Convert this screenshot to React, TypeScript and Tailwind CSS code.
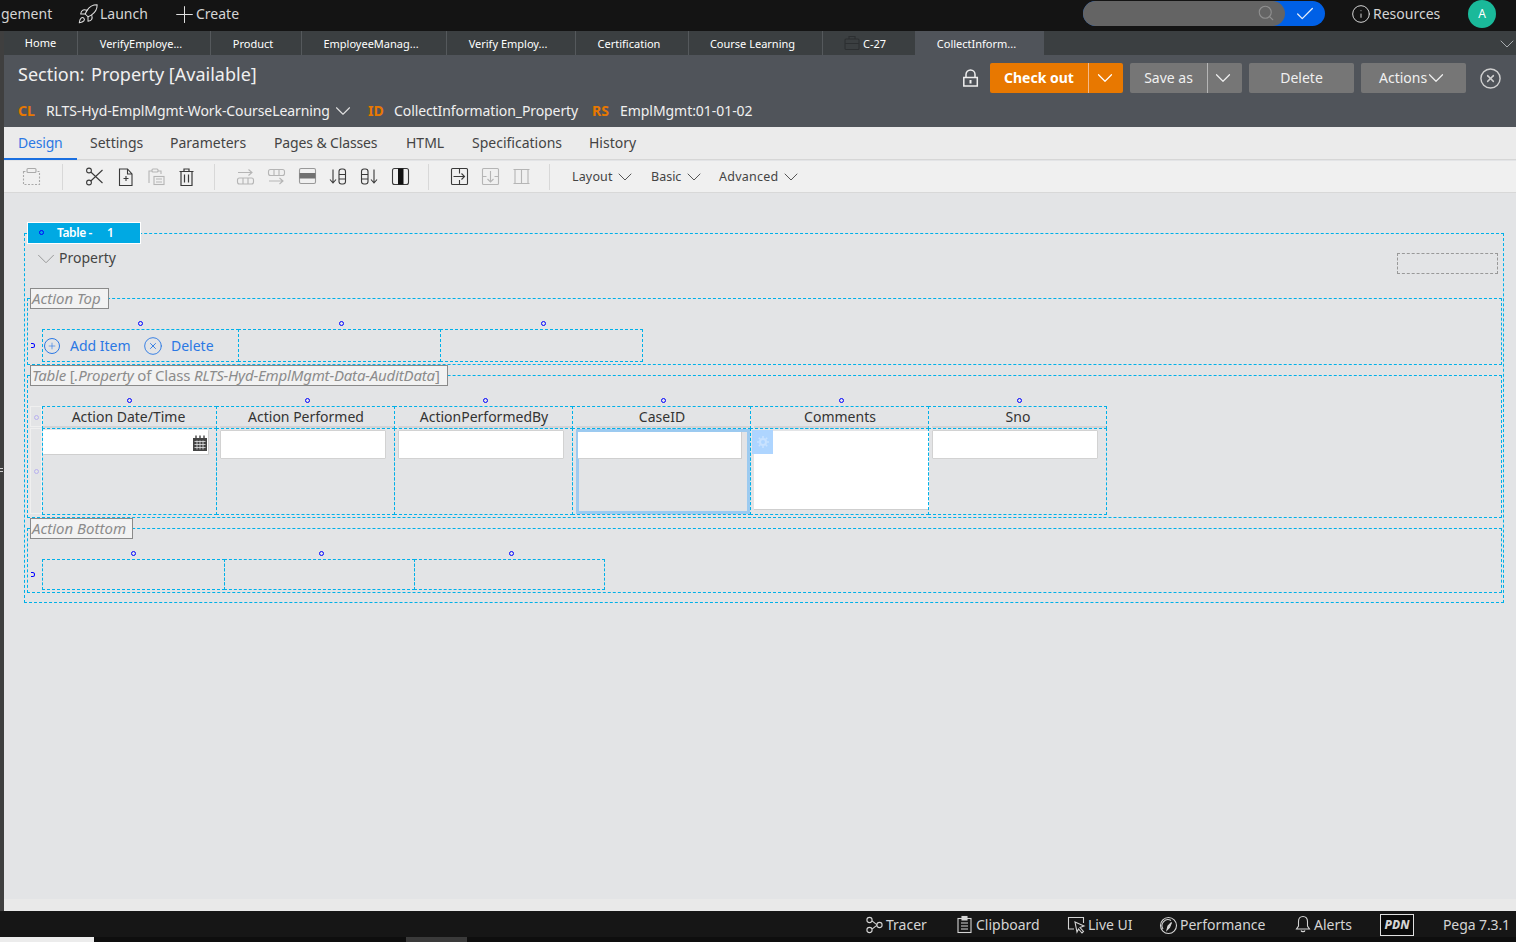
import React from "react";
import { Rocket, Plus, Search, Check, Info, ChevronDown, CircleX } from "lucide-react";

const Dash = ({ c }: { c: string }) => <div className={"absolute border border-dashed border-[#00b0e8] " + c} />;
const Dot = ({ c }: { c: string }) => <div className={"absolute w-[5px] h-[5px] rounded-full border border-[#0000ff] " + c} />;
const T = ({ c, children }: { c: string; children: React.ReactNode }) => <div className={"absolute whitespace-nowrap " + c}>{children}</div>;
const Ico = ({ c, children, size = 20, stroke = "#333" }: { c: string; children: React.ReactNode; size?: number; stroke?: string }) => (
  <svg className={"absolute " + c} width={size} height={size} viewBox={`0 0 ${size} ${size}`} fill="none" stroke={stroke} strokeWidth="1.1">{children}</svg>
);
const Tab = ({ c, children }: { c: string; children: React.ReactNode }) => (
  <div className={"absolute top-[31px] h-[24px] leading-[25px] text-[11px] text-center text-white border-r border-[#55595c] pr-[6px] " + c}>{children}</div>
);
const HeadTxt = ({ c, children }: { c: string; children: React.ReactNode }) => (
  <div className={"absolute top-[407px] h-[20px] leading-[20px] text-[14px] text-center text-[#333] " + c}>{children}</div>
);

export default function App() {
  return (
    <div className="relative w-[1516px] h-[942px] overflow-hidden bg-[#e3e4e6] [font-family:'Open_Sans',sans-serif]">
      {/* top bar */}
      <div className="absolute left-0 top-0 w-[1516px] h-[31px] bg-[#141414]" />
      <T c="left-[1px] top-[4px] h-[20px] leading-[20px] text-[14px] text-[#d4d4d4]">gement</T>
      <Rocket className="absolute left-[77px] top-[3px] text-[#e0e0e0]" size={22} strokeWidth={1.1} />
      <T c="left-[100px] top-[4px] h-[20px] leading-[20px] text-[14px] text-[#d4d4d4]">Launch</T>
      <Plus className="absolute left-[171px] top-[1px] text-[#e0e0e0]" size={27} strokeWidth={0.9} />
      <T c="left-[196px] top-[4px] h-[20px] leading-[20px] text-[14px] text-[#d4d4d4]">Create</T>
      <div className="absolute left-[1083px] top-[1px] w-[242px] h-[25px] rounded-full bg-[#0060e6]" />
      <div className="absolute left-[1083px] top-[1px] w-[202px] h-[25px] rounded-full bg-[#646464]" />
      <Search className="absolute left-[1257px] top-[4px] text-[#8f8f8f]" size={18} strokeWidth={1.5} />
      <Check className="absolute left-[1294px] top-[3px] text-[#e8eef8]" size={22} strokeWidth={1.4} />
      <Info className="absolute left-[1351px] top-[4px] text-[#d4d4d4]" size={20} strokeWidth={1.2} />
      <T c="left-[1373px] top-[4px] h-[20px] leading-[20px] text-[14px] text-[#d4d4d4]">Resources</T>
      <div className="absolute left-[1468px] top-0 w-[28px] h-[28px] rounded-full bg-[#1ab99a] text-white text-[12px] leading-[28px] text-center">A</div>

      {/* left strip */}
      <div className="absolute left-0 top-[31px] w-[4px] h-[880px] bg-[#3f3f3f]" />
      <div className="absolute left-0 top-[468px] w-[3px] h-[1px] bg-[#cfcfcf]" />
      <div className="absolute left-0 top-[471px] w-[3px] h-[1px] bg-[#cfcfcf]" />

      {/* tab bar */}
      <div className="absolute left-[4px] top-[31px] w-[1512px] h-[24px] bg-[#3b3f41]" />
      <Tab c="left-[4px] w-[74px]"><span className="relative top-[-1px] left-[3px]">Home</span></Tab>
      <Tab c="left-[78px] w-[133px]">VerifyEmploye...</Tab>
      <Tab c="left-[211px] w-[91px]">Product</Tab>
      <Tab c="left-[302px] w-[145px]">EmployeeManag...</Tab>
      <Tab c="left-[447px] w-[129px]">Verify Employ...</Tab>
      <Tab c="left-[576px] w-[113px]">Certification</Tab>
      <Tab c="left-[689px] w-[134px]">Course Learning</Tab>
      <T c="left-[863px] top-[31px] h-[24px] leading-[25px] text-[11px] text-white">C-27</T>
      <Ico c="left-[844px] top-[35px]" size={16} stroke="#2c2f31">
        <rect x="1" y="4" width="14" height="10.5" rx="1" />
        <path d="M5 4V1.5h6V4M1 8.5h14" />
      </Ico>
      <div className="absolute left-[915px] top-[31px] w-[129px] h-[24px] bg-[#50545a] text-white text-[11px] leading-[25px] text-center pr-[6px]">CollectInform...</div>
      <ChevronDown className="absolute left-[1495px] top-[32px] text-[#a9adb0]" size={24} strokeWidth={1} />

      {/* header */}
      <div className="absolute left-[4px] top-[55px] w-[1512px] h-[72px] bg-[#50545a]" />
      <T c="left-[18px] top-[61px] h-[26px] leading-[26px] text-[18px] text-[#f0f0f0]">Section:</T>
      <T c="left-[91px] top-[61px] h-[26px] leading-[26px] text-[18px] text-[#f0f0f0]">Property [Available]</T>
      <T c="left-[18px] top-[101px] h-[20px] leading-[20px] text-[14px] font-bold text-[#e87800]">CL</T>
      <T c="left-[46px] top-[101px] h-[20px] leading-[20px] text-[14px] tracking-[-0.09px] text-[#f0f0f0]">RLTS-Hyd-EmplMgmt-Work-CourseLearning</T>
      <ChevronDown className="absolute left-[330px] top-[98px] text-[#e0e0e0]" size={26} strokeWidth={1} />
      <T c="left-[368px] top-[101px] h-[20px] leading-[20px] text-[14px] font-bold text-[#e87800]">ID</T>
      <T c="left-[394px] top-[101px] h-[20px] leading-[20px] text-[14px] tracking-[-0.09px] text-[#f0f0f0]">CollectInformation_Property</T>
      <T c="left-[592px] top-[101px] h-[20px] leading-[20px] text-[14px] font-bold text-[#e87800]">RS</T>
      <T c="left-[620px] top-[101px] h-[20px] leading-[20px] text-[14px] tracking-[-0.05px] text-[#f0f0f0]">EmplMgmt:01-01-02</T>

      <Ico c="left-[962px] top-[69px]" size={18} stroke="#eeeeee">
        <path d="M4 8.500V5.500a4.500 4.500 0 0 1 9 0v3" strokeWidth="1.5" />
        <rect x="1.800" y="8.500" width="13.500" height="8.500" strokeWidth="1.5" />
        <rect x="7.500" y="11" width="2" height="3.500" fill="#eeeeee" stroke="none" />
      </Ico>
      <div className="absolute left-[990px] top-[63px] w-[133px] h-[30px] rounded-[2px] bg-[#e87800]" />
      <T c="left-[990px] top-[63px] w-[98px] h-[30px] leading-[29px] text-center text-[14px] font-bold text-white">Check out</T>
      <div className="absolute left-[1088px] top-[63px] w-[1px] h-[30px] bg-[#f4b98a]" />
      <ChevronDown className="absolute left-[1092px] top-[65px] text-white" size={26} strokeWidth={1.1} />
      <div className="absolute left-[1130px] top-[63px] w-[112px] h-[30px] rounded-[2px] bg-[#767676]" />
      <T c="left-[1130px] top-[63px] w-[77px] h-[30px] leading-[29px] text-center text-[14px] text-[#f0f0f0]">Save as</T>
      <div className="absolute left-[1207px] top-[63px] w-[1px] h-[30px] bg-[#b5b5b5]" />
      <ChevronDown className="absolute left-[1210px] top-[65px] text-[#f0f0f0]" size={26} strokeWidth={1.1} />
      <div className="absolute left-[1249px] top-[63px] w-[105px] h-[30px] rounded-[2px] bg-[#767676] text-center text-[14px] leading-[29px] text-[#f0f0f0]">Delete</div>
      <div className="absolute left-[1361px] top-[63px] w-[105px] h-[30px] rounded-[2px] bg-[#767676]" />
      <T c="left-[1379px] top-[63px] h-[30px] leading-[29px] text-[14px] text-[#f0f0f0]">Actions</T>
      <ChevronDown className="absolute left-[1423px] top-[65px] text-[#f0f0f0]" size={26} strokeWidth={1.1} />
      <CircleX className="absolute left-[1479px] top-[67px] text-[#cfcfcf]" size={23} strokeWidth={1.5} />

      {/* rule tabs */}
      <div className="absolute left-[4px] top-[127px] w-[1512px] h-[33px] bg-[#ebebeb] border-b border-[#d6d6d6]" />
      <div className="absolute left-[4px] top-[158px] w-[73px] h-[2px] bg-[#1a6fe0]" />
      <T c="left-[18px] top-[133px] h-[20px] leading-[20px] text-[14px] tracking-[-0.2px] text-[#2b78e4]">Design</T>
      <T c="left-[90px] top-[133px] h-[20px] leading-[20px] text-[14px] text-[#444]">Settings</T>
      <T c="left-[170px] top-[133px] h-[20px] leading-[20px] text-[14px] text-[#444]">Parameters</T>
      <T c="left-[274px] top-[133px] h-[20px] leading-[20px] text-[14px] tracking-[-0.13px] text-[#444]">Pages &amp; Classes</T>
      <T c="left-[406px] top-[133px] h-[20px] leading-[20px] text-[14px] text-[#444]">HTML</T>
      <T c="left-[472px] top-[133px] h-[20px] leading-[20px] text-[14px] text-[#444]">Specifications</T>
      <T c="left-[589px] top-[133px] h-[20px] leading-[20px] text-[14px] text-[#444]">History</T>

      {/* toolbar */}
      <div className="absolute left-[4px] top-[161px] w-[1512px] h-[32px] bg-[#f0f0f0] border-b border-[#d8d8d8]" />
      <div className="absolute left-[62px] top-[164px] w-[1px] h-[26px] bg-[#d8d8d8]" />
      <div className="absolute left-[214px] top-[164px] w-[1px] h-[26px] bg-[#d8d8d8]" />
      <div className="absolute left-[428px] top-[164px] w-[1px] h-[26px] bg-[#d8d8d8]" />
      <div className="absolute left-[549px] top-[164px] w-[1px] h-[26px] bg-[#d8d8d8]" />

      <Ico c="left-[22px] top-[167px]" stroke="#aaaaaa">
        <rect x="1.500" y="4.500" width="16" height="13" strokeDasharray="2 1.500" />
        <rect x="5" y="1.500" width="9" height="4" rx="1" fill="#f0f0f0" />
      </Ico>
      <Ico c="left-[85px] top-[167px]" stroke="#3a3a3a">
        <circle cx="4" cy="3.500" r="2.400" /><circle cx="4" cy="15.500" r="2.400" />
        <path d="M5.800 5 L17.500 16 M5.800 14 L17.500 3" />
      </Ico>
      <Ico c="left-[116px] top-[167px]" stroke="#3a3a3a">
        <path d="M3.500 2h8l4.500 5v11.500H3.500zM11.500 2v5h4.500" />
        <path d="M7.500 11.500h5M10 9v5" />
      </Ico>
      <Ico c="left-[146px] top-[167px]" stroke="#b5b5b5">
        <path d="M3 16V4h3M12 4h3v3" /><rect x="6" y="2" width="6" height="3" rx="1" />
        <rect x="8" y="9.500" width="10" height="8" /><path d="M10 12h6M10 15h6" />
      </Ico>
      <Ico c="left-[177px] top-[167px]" stroke="#3a3a3a" >
        <path d="M2.500 4.500h14M7 4.500V2h5v2.500M4 4.500v14h11v-14" strokeWidth="1.200" />
        <path d="M7.500 7.500v8M11.500 7.500v8" strokeWidth="1.200" />
      </Ico>
      <Ico c="left-[236px] top-[167px]" stroke="#b5b5b5">
        <path d="M2 5.500h14M12.500 2.500l3.500 3-3.500 3" />
        <rect x="1.500" y="11" width="16" height="6" rx="2" /><path d="M7 11v6M12 11v6" />
      </Ico>
      <Ico c="left-[267px] top-[167px]" stroke="#b5b5b5">
        <rect x="1.500" y="2.500" width="16" height="6" rx="2" /><path d="M7 2.500v6M12 2.500v6" />
        <path d="M2 14h14M12.500 11l3.500 3-3.500 3" />
      </Ico>
      <Ico c="left-[298px] top-[167px]" stroke="#999">
        <rect x="1.500" y="1.500" width="16" height="15" rx="1.500" />
        <rect x="1.500" y="6" width="16" height="5.500" fill="#707070" stroke="none" />
      </Ico>
      <Ico c="left-[328px] top-[167px]" stroke="#3a3a3a">
        <path d="M5 2.500v13M2 12.500l3 3.500 3-3.500" />
        <rect x="11" y="2" width="6.500" height="15" rx="2.500" /><path d="M11 7.500h6.500M11 12h6.500" />
      </Ico>
      <Ico c="left-[360px] top-[167px]" stroke="#3a3a3a">
        <rect x="1.500" y="2" width="6.500" height="15" rx="2.500" /><path d="M1.500 7.500h6.500M1.500 12h6.500" />
        <path d="M14 2.500v13M11 12.500l3 3.500 3-3.500" />
      </Ico>
      <Ico c="left-[391px] top-[167px]" stroke="#3a3a3a">
        <rect x="1.500" y="1.500" width="16" height="16" rx="2" />
        <rect x="7" y="1.500" width="5.500" height="16" fill="#111" stroke="none" />
      </Ico>
      <Ico c="left-[450px] top-[167px]" stroke="#3a3a3a">
        <rect x="1.500" y="1.500" width="16" height="16" rx="1" />
        <path d="M9.500 1.500v5M9.500 13v4.500M3.500 9.500h11M11.500 6.500l3 3-3 3" />
      </Ico>
      <Ico c="left-[481px] top-[167px]" stroke="#b5b5b5">
        <rect x="1.500" y="1.500" width="16" height="16" rx="1" />
        <path d="M1.500 9.500h4M13.500 9.500h4M9.500 4v11M6.500 12l3 3 3-3" />
      </Ico>
      <Ico c="left-[512px] top-[167px]" stroke="#b5b5b5">
        <path d="M1.500 2.500h16M1.500 16.500h16M3 2.500v14M9.500 2.500v14M16 2.500v14" />
      </Ico>

      <T c="left-[572px] top-[168px] h-[18px] leading-[18px] text-[12.5px] tracking-[0.15px] text-[#444]">Layout</T>
      <ChevronDown className="absolute left-[613px] top-[165px] text-[#555]" size={24} strokeWidth={1} />
      <T c="left-[651px] top-[168px] h-[18px] leading-[18px] text-[12.5px] text-[#444]">Basic</T>
      <ChevronDown className="absolute left-[682px] top-[165px] text-[#555]" size={24} strokeWidth={1} />
      <T c="left-[719px] top-[168px] h-[18px] leading-[18px] text-[12.5px] tracking-[0.25px] text-[#444]">Advanced</T>
      <ChevronDown className="absolute left-[779px] top-[165px] text-[#555]" size={24} strokeWidth={1} />

      {/* canvas frames */}
      <Dash c="left-[24px] top-[233px] w-[1480px] h-[370px]" />
      <div className="absolute left-[27px] top-[222px] w-[114px] h-[22px] bg-[#00a9e3] border border-white" />
      <Dot c="left-[39px] top-[230px]" />
      <T c="left-[57px] top-[224px] h-[18px] leading-[18px] text-[12px] tracking-[-0.4px] font-semibold text-white">Table -</T>
      <T c="left-[107px] top-[224px] h-[18px] leading-[18px] text-[12px] font-semibold text-white">1</T>
      <ChevronDown className="absolute left-[31px] top-[244px] text-[#999]" size={30} strokeWidth={0.8} />
      <T c="left-[59px] top-[248px] h-[20px] leading-[20px] text-[14px] text-[#444]">Property</T>
      <div className="absolute left-[1397px] top-[253px] w-[101px] h-[21px] border border-dashed border-[#999]" />

      <Dash c="left-[27px] top-[298px] w-[1475px] h-[67px]" />
      <div className="absolute left-[30px] top-[288px] w-[79px] h-[21px] bg-[#f2f2f2] border border-[#8a8a8a]" />
      <T c="left-[32px] top-[289px] h-[19px] leading-[19px] text-[15px] italic text-[#8c8c8c]">Action Top</T>

      <Dash c="left-[42px] top-[329px] w-[197px] h-[33px]" />
      <Dash c="left-[238px] top-[329px] w-[203px] h-[33px]" />
      <Dash c="left-[440px] top-[329px] w-[203px] h-[33px]" />
      <Dot c="left-[138px] top-[321px]" />
      <Dot c="left-[339px] top-[321px]" />
      <Dot c="left-[541px] top-[321px]" />
      <div className="absolute left-[31px] top-[343px] w-[4px] h-[5px] rounded-r-full border border-l-0 border-[#0000ff]" />
      <div className="absolute left-[44px] top-[338px] w-[16px] h-[16px] rounded-full border border-[#2b78e4]" />
      <Plus className="absolute left-[47px] top-[341px] text-[#2b78e4]" size={10} strokeWidth={1.5} />
      <T c="left-[70px] top-[336px] h-[20px] leading-[20px] text-[14px] text-[#2b78e4]">Add Item</T>
      <CircleX className="absolute left-[143px] top-[336px] text-[#2b78e4]" size={20} strokeWidth={1.1} />
      <T c="left-[171px] top-[336px] h-[20px] leading-[20px] text-[14px] text-[#2b78e4]">Delete</T>

      <Dash c="left-[27px] top-[375px] w-[1475px] h-[143px]" />
      <div className="absolute left-[30px] top-[365px] w-[418px] h-[21px] bg-[#f2f2f2] border border-[#8a8a8a]" />
      <T c="left-[32px] top-[366px] h-[19px] leading-[19px] text-[15px] tracking-[-0.17px] text-[#8c8c8c]"><i>Table</i> [<i>.Property</i> of Class <i>RLTS-Hyd-EmplMgmt-Data-AuditData</i>]</T>

      <div className="absolute left-[30px] top-[406px] w-[12px] h-[21px] border border-[#efefef]" />
      <div className="absolute left-[30px] top-[428px] w-[12px] h-[86px] border border-[#efefef]" />
      <div className="absolute left-[34px] top-[415px] w-[5px] h-[5px] rounded-full border border-[#b8b0f0]" />
      <div className="absolute left-[34px] top-[469px] w-[5px] h-[5px] rounded-full border border-[#b8b0f0]" />

      {/* header row */}
      <div className="absolute left-[43px] top-[426px] w-[173px] h-[2px] bg-[#d2d3d5]" />
      <div className="absolute left-[220px] top-[426px] w-[174px] h-[2px] bg-[#d2d3d5]" />
      <div className="absolute left-[398px] top-[426px] w-[174px] h-[2px] bg-[#d2d3d5]" />
      <div className="absolute left-[576px] top-[426px] w-[174px] h-[2px] bg-[#d2d3d5]" />
      <div className="absolute left-[754px] top-[426px] w-[174px] h-[2px] bg-[#d2d3d5]" />
      <div className="absolute left-[932px] top-[426px] w-[174px] h-[2px] bg-[#d2d3d5]" />

      <HeadTxt c="left-[42px] w-[173px]">Action Date/Time</HeadTxt>
      <HeadTxt c="left-[218px] w-[176px]">Action Performed</HeadTxt>
      <HeadTxt c="left-[396px] w-[176px]">ActionPerformedBy</HeadTxt>
      <HeadTxt c="left-[574px] w-[176px]">CaseID</HeadTxt>
      <HeadTxt c="left-[752px] w-[176px]">Comments</HeadTxt>
      <HeadTxt c="left-[930px] w-[176px]">Sno</HeadTxt>

      {/* cells */}
      <div className="absolute left-[43px] top-[430px] w-[166px] h-[25px] bg-white border-b border-r border-[#cfcfcf] rounded-[1px]" />
      <Ico c="left-[192px] top-[435px]" size={17} stroke="#444">
        <rect x="1" y="3" width="14" height="13" fill="#444" stroke="none" />
        <path d="M4 0.500v3M8 0.500v3M12 0.500v3" strokeWidth="1.400" />
        <path d="M2.500 6.500h11M2.500 9.500h11M2.500 12.500h11M5 5.500v9M8 5.500v9M11 5.500v9" stroke="#e3e4e6" strokeWidth=".8" />
      </Ico>
      <div className="absolute left-[220px] top-[430px] w-[166px] h-[29px] bg-white border border-[#d2d2d2] rounded-[1px]" />
      <div className="absolute left-[398px] top-[430px] w-[166px] h-[29px] bg-white border border-[#d2d2d2] rounded-[1px]" />
      <div className="absolute left-[576px] top-[429px] w-[174px] h-[85px] border-[3px] border-[#9ccaf0]" />
      <div className="absolute left-[578px] top-[432px] w-[164px] h-[27px] bg-white border-b border-r border-[#cfcfcf]" />
      <div className="absolute left-[754px] top-[431px] w-[175px] h-[79px] bg-white border-b border-[#cfcfcf]" />
      <div className="absolute left-[752px] top-[430px] w-[21px] h-[24px] bg-[#aed5ff]" />
      <Ico c="left-[756px] top-[435px]" size={14} stroke="#c8e2ff">
        <circle cx="7" cy="7" r="3" strokeWidth="2" />
        <path d="M7 1v2M7 11v2M1 7h2M11 7h2M2.800 2.800l1.400 1.400M9.800 9.800l1.400 1.400M2.800 11.200l1.400-1.400M9.800 4.200l1.400-1.400" strokeWidth="1.600" />
      </Ico>
      <div className="absolute left-[932px] top-[430px] w-[166px] h-[29px] bg-white border border-[#d2d2d2] rounded-[1px]" />

      {/* table grid */}
      <Dash c="left-[42px] top-[406px] w-[175px] h-[23px]" />
      <Dash c="left-[216px] top-[406px] w-[179px] h-[23px]" />
      <Dash c="left-[394px] top-[406px] w-[179px] h-[23px]" />
      <Dash c="left-[572px] top-[406px] w-[179px] h-[23px]" />
      <Dash c="left-[750px] top-[406px] w-[179px] h-[23px]" />
      <Dash c="left-[928px] top-[406px] w-[179px] h-[23px]" />
      <Dash c="left-[42px] top-[428px] w-[175px] h-[87px]" />
      <Dash c="left-[216px] top-[428px] w-[179px] h-[87px]" />
      <Dash c="left-[394px] top-[428px] w-[179px] h-[87px]" />
      <Dash c="left-[572px] top-[428px] w-[179px] h-[87px]" />
      <Dash c="left-[750px] top-[428px] w-[179px] h-[87px]" />
      <Dash c="left-[928px] top-[428px] w-[179px] h-[87px]" />
      <Dot c="left-[127px] top-[398px]" />
      <Dot c="left-[305px] top-[398px]" />
      <Dot c="left-[483px] top-[398px]" />
      <Dot c="left-[661px] top-[398px]" />
      <Dot c="left-[839px] top-[398px]" />
      <Dot c="left-[1017px] top-[398px]" />

      <Dash c="left-[27px] top-[528px] w-[1475px] h-[65px]" />
      <div className="absolute left-[30px] top-[518px] w-[103px] h-[21px] bg-[#f2f2f2] border border-[#8a8a8a]" />
      <T c="left-[32px] top-[519px] h-[19px] leading-[19px] text-[15px] italic text-[#8c8c8c]">Action Bottom</T>
      <Dash c="left-[42px] top-[559px] w-[183px] h-[31px]" />
      <Dash c="left-[224px] top-[559px] w-[191px] h-[31px]" />
      <Dash c="left-[414px] top-[559px] w-[191px] h-[31px]" />
      <Dot c="left-[131px] top-[551px]" />
      <Dot c="left-[319px] top-[551px]" />
      <Dot c="left-[509px] top-[551px]" />
      <div className="absolute left-[31px] top-[572px] w-[4px] h-[5px] rounded-r-full border border-l-0 border-[#0000ff]" />

      {/* footer */}
      <div className="absolute left-[4px] top-[899px] w-[1512px] h-[12px] bg-[#e9e9e9]" />
      <div className="absolute left-0 top-[911px] w-[1516px] h-[31px] bg-[#161616]" />
      <div className="absolute left-0 top-[937px] w-[1516px] h-[5px] bg-[#0e0e0e]" />
      <div className="absolute left-0 top-[937px] w-[94px] h-[5px] bg-[#ececec]" />
      <div className="absolute left-[406px] top-[937px] w-[61px] h-[5px] bg-[#3a3a3a]" />

      <Ico c="left-[865px] top-[916px]" size={19} stroke="#d4d4d4">
        <circle cx="4.500" cy="4" r="2.600" /><circle cx="4.500" cy="14" r="2.600" /><circle cx="14.500" cy="9" r="2.600" />
        <path d="M7 5c2 1 3 3 5 3.500M7 13c2-1 3-3 5-3.500" />
      </Ico>
      <T c="left-[886px] top-[915px] h-[20px] leading-[20px] text-[14px] text-[#d4d4d4]">Tracer</T>
      <Ico c="left-[956px] top-[915px]" size={19} stroke="#d4d4d4">
        <rect x="2" y="3.500" width="13" height="14" />
        <rect x="6" y="1.500" width="5" height="3.500" fill="#d4d4d4" />
        <path d="M5 8h7M5 11h7M5 14h7" />
      </Ico>
      <T c="left-[976px] top-[915px] h-[20px] leading-[20px] text-[14px] text-[#d4d4d4]">Clipboard</T>
      <Ico c="left-[1067px] top-[915px]" size={20} stroke="#d4d4d4">
        <path d="M7 14H1.500V2.500h15V8" />
        <path d="M8 7l9 4-4 1.500 3.500 4-1.500 1.500-3.500-4L10 17z" />
      </Ico>
      <T c="left-[1088px] top-[915px] h-[20px] leading-[20px] text-[14px] text-[#d4d4d4]">Live UI</T>
      <Ico c="left-[1159px] top-[916px]" size={19} stroke="#d4d4d4">
        <circle cx="9.500" cy="9.500" r="8" />
        <path d="M4 13a6 6 0 0 1 8-8.500" />
        <path d="M8 14l1-4 3.500-3.500-2 5z" fill="#d4d4d4" />
      </Ico>
      <T c="left-[1180px] top-[915px] h-[20px] leading-[20px] text-[14px] text-[#d4d4d4]">Performance</T>
      <Ico c="left-[1294px] top-[915px]" size={18} stroke="#d4d4d4">
        <path d="M9 1.500c-3 0-4.500 2-4.500 5V11L2.500 14h13l-2-3V6.500c0-3-1.500-5-4.500-5z" />
        <path d="M7 15.500c.5 1.500 3.500 1.500 4 0" />
      </Ico>
      <T c="left-[1314px] top-[915px] h-[20px] leading-[20px] text-[14px] text-[#d4d4d4]">Alerts</T>
      <div className="absolute left-[1380px] top-[914px] w-[34px] h-[22px] border border-[#e0e0e0] bg-[#0a0a0a] text-center text-[12px] leading-[19px] font-extrabold italic text-[#d4d4d4]">PDN</div>
      <T c="left-[1443px] top-[915px] h-[20px] leading-[20px] text-[14px] tracking-[-0.1px] text-[#d4d4d4]">Pega 7.3.1</T>
    </div>
  );
}
